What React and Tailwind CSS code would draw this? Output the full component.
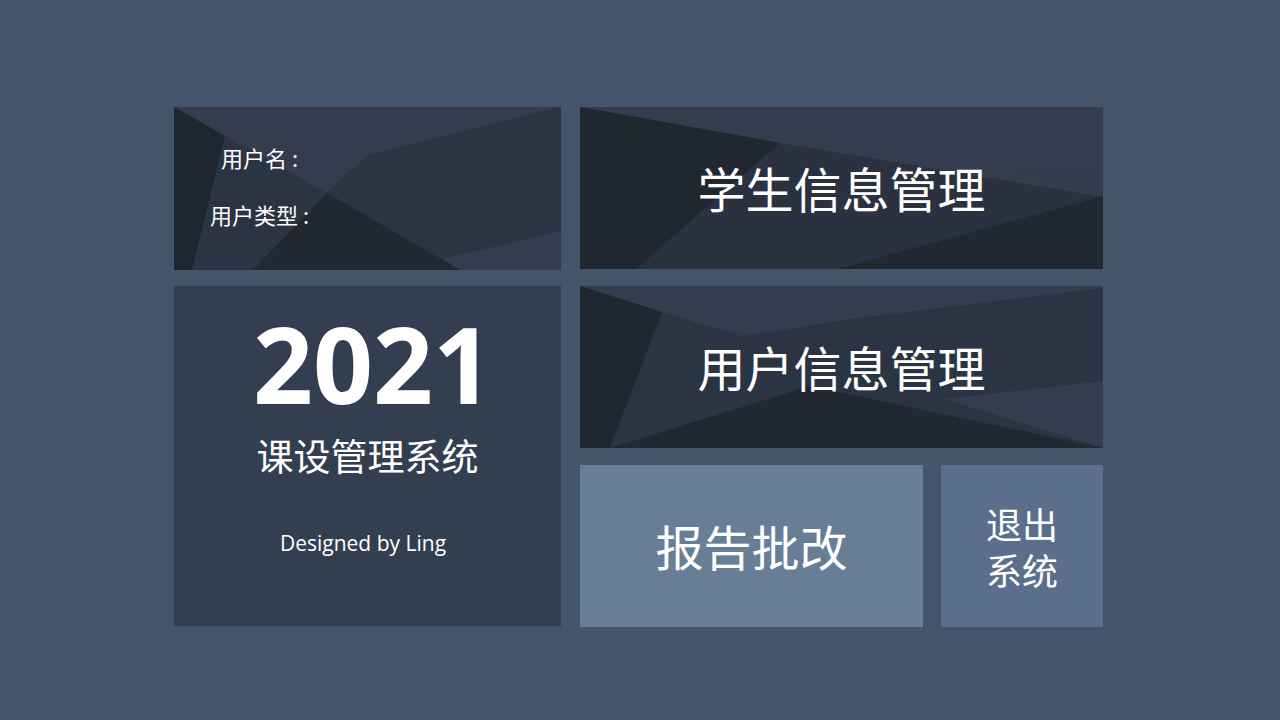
import React from "react";

const CJK = { fontFamily: '"Noto Sans CJK SC", "Noto Sans", sans-serif' };
const LAT = { fontFamily: '"Open Sans", "Noto Sans", sans-serif' };

function Poly({ points, fill }) {
  return <polygon points={points} fill={fill} />;
}

function Bg1() {
  return (
    <svg className="absolute inset-0 h-full w-full" viewBox="0 0 387 163" preserveAspectRatio="none">
      <rect width="387" height="163" fill="#2b3442" />
      <Poly points="0,0 387,0 193,48 153,86" fill="#333d4e" />
      <Poly points="0,0 51,29 18,163 0,163" fill="#20262f" />
      <Poly points="153,86 286,163 79,163" fill="#222832" />
      <Poly points="268,152 387,124 387,163 286,163" fill="#333d4e" />
    </svg>
  );
}

function Bg2() {
  return (
    <svg className="absolute inset-0 h-full w-full" viewBox="0 0 523 162" preserveAspectRatio="none">
      <rect width="523" height="162" fill="#2a3240" />
      <Poly points="0,0 523,0 523,90 200,36" fill="#333d4e" />
      <Poly points="420,63 523,58 523,90" fill="#323c4c" />
      <Poly points="0,0 200,36 56,162 0,162" fill="#21272f" />
      <Poly points="258,162 523,89 523,162" fill="#222831" />
    </svg>
  );
}

function Bg3() {
  return (
    <svg className="absolute inset-0 h-full w-full" viewBox="0 0 523 162" preserveAspectRatio="none">
      <rect width="523" height="162" fill="#2b3442" />
      <Poly points="0,0 523,0 523,2 278,32 162,50 82,26" fill="#333d4e" />
      <Poly points="0,0 82,26 30,162 0,162" fill="#20262f" />
      <Poly points="364,113 523,95 523,162" fill="#333d4e" />
      <Poly points="30,162 230,100 523,162" fill="#222831" />
    </svg>
  );
}

export default function App() {
  return (
    <div className="h-[720px] w-full overflow-hidden bg-[#44546a] pl-[174px] pt-[107px]">
      <div className="flex gap-[19px]">
        <div className="flex w-[387px] flex-col gap-[16px]">
          <div className="relative h-[163px] overflow-hidden">
            <Bg1 />
            <div className="relative flex flex-col pt-[39px] text-[22px] leading-none text-white" style={CJK}>
              <div className="pl-[47px]">用户名<span className="ml-[5px]">:</span></div>
              <div className="mt-[35px] pl-[36px]">用户类型<span className="ml-[5px]">:</span></div>
            </div>
          </div>
          <div className="flex h-[340px] flex-col items-center bg-[#333f50] text-white">
            <div className="ml-[11px] mt-[10px] text-[105px] font-bold leading-[1.3]" style={LAT}>2021</div>
            <div className="mt-[4px] text-[37px] leading-none" style={CJK}>课设管理系统</div>
            <div className="mr-[9px] mt-[59px] text-[21px] leading-none" style={LAT}>Designed by Ling</div>
          </div>
        </div>
        <div className="flex w-[523px] flex-col gap-[17px]">
          <div className="relative flex h-[162px] items-center justify-center overflow-hidden">
            <Bg2 />
            <span className="relative -mt-[3px] text-[48px] leading-none text-white" style={CJK}>学生信息管理</span>
          </div>
          <div className="relative flex h-[162px] items-center justify-center overflow-hidden">
            <Bg3 />
            <span className="relative -mt-[3px] text-[48px] leading-none text-white" style={CJK}>用户信息管理</span>
          </div>
          <div className="flex h-[162px] gap-[18px]">
            <div className="flex w-[343px] items-center justify-center bg-[#687d96]">
              <span className="-mt-[2px] text-[48px] leading-none text-white" style={CJK}>报告批改</span>
            </div>
            <div className="flex w-[162px] flex-col items-center justify-center gap-[10px] bg-[#5b6f8d] text-[36px] leading-none text-white" style={CJK}>
              <span>退出</span>
              <span>系统</span>
            </div>
          </div>
        </div>
      </div>
    </div>
  );
}
